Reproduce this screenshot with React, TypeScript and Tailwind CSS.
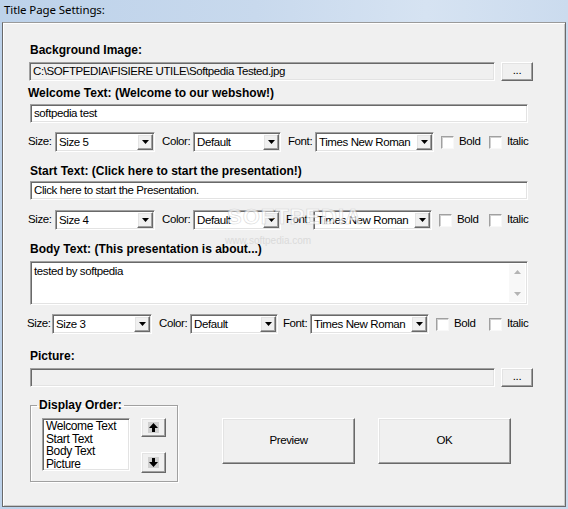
import React from "react";

const NARROW = "font-['Liberation_Sans',Arial,sans-serif] text-[11.5px] tracking-[-0.4px] text-black";
const BOLD = "font-['Liberation_Sans',Arial,sans-serif] font-bold text-[12px] leading-[14px] tracking-normal text-black";
const SUNKEN =
  "border border-t-[#a0a0a0] border-l-[#a0a0a0] border-r-white border-b-white shadow-[inset_1px_1px_0_#696969,inset_-1px_-1px_0_#e3e3e3]";
const RAISED =
  "border border-t-white border-l-white border-r-[#696969] border-b-[#696969] shadow-[inset_-1px_-1px_0_#a0a0a0,inset_1px_1px_0_#e3e3e3]";

function Select({ cls, value }: { cls: string; value: string }) {
  return (
    <div className={`${SUNKEN} bg-white h-[20px] p-[1px] flex items-center ${cls}`}>
      <span className="flex-1 pl-[2px] leading-[16px] whitespace-nowrap overflow-hidden">{value}</span>
      <div className={`${RAISED} bg-[#f0f0f0] w-[16px] h-[16px] flex items-center justify-center shrink-0`}>
        <svg width="7" height="4" viewBox="0 0 7 4">
          <polygon points="0,0 7,0 3.5,4" fill="#000" />
        </svg>
      </div>
    </div>
  );
}

function Check({ cls = "" }: { cls?: string }) {
  return (
    <div
      className={`w-[13px] h-[13px] shrink-0 bg-white border border-t-[#a0a0a0] border-l-[#a0a0a0] border-r-[#f8f8f8] border-b-[#f8f8f8] shadow-[inset_1px_1px_0_#d0d0d0] ${cls}`}
    />
  );
}

function Arrow({ up }: { up: boolean }) {
  return (
    <div className="w-[11px] h-[11px] bg-[#d0d0d0] flex items-center justify-center">
      <svg width="9" height="9" viewBox="0 0 9 9">
        {up ? (
          <polygon points="4.5,0 9,5 6,5 6,9 3,9 3,5 0,5" fill="#000" />
        ) : (
          <polygon points="3,0 6,0 6,4 9,4 4.5,9 0,4 3,4" fill="#000" />
        )}
      </svg>
    </div>
  );
}

export default function App() {
  return (
    <div className="w-[568px] h-[509px] overflow-hidden flex flex-col bg-[linear-gradient(90deg,#bdd2ea_0%,#c8d9ed_45%,#d6e3f2_75%,#cbdbee_100%)]">
      <div className="h-[22px] flex items-center pl-[4px] pb-[2px] font-['Noto_Sans','Open_Sans',sans-serif] text-[11.5px] tracking-[-0.1px] text-black">
        Title Page Settings:
      </div>
      <div className={`relative mx-[2px] h-[485px] bg-[#f0f0f0] border border-[#6a6a6a] border-t-[#9a9a9a] shadow-[inset_1px_1px_0_#ffffff,inset_-1px_-1px_0_#c8c8c8] flex flex-col ${NARROW}`}>
        {/* Background image */}
        <div className={`mt-[20px] ml-[27px] ${BOLD}`}>Background Image:</div>
        <div className="mt-[5px] ml-[26px] flex">
          <div className={`${SUNKEN} bg-[#f0f0f0] w-[466px] h-[19px] flex items-center pl-[3px] leading-[15px] whitespace-nowrap`}>
            C:\SOFTPEDIA\FISIERE UTILE\Softpedia Tested.jpg
          </div>
          <div className={`${RAISED} bg-[#f0f0f0] ml-[6px] w-[32px] h-[19px] flex items-center justify-center leading-none pb-[2px]`}>
            ...
          </div>
        </div>

        {/* Welcome text */}
        <div className={`mt-[5px] ml-[25px] ${BOLD}`}>Welcome Text: (Welcome to our webshow!)</div>
        <div className={`${SUNKEN} mt-[4px] ml-[27px] bg-white w-[498px] h-[19px] flex items-center pl-[3px] leading-[15px]`}>
          softpedia test
        </div>
        <div className="mt-[9px] ml-[25px] flex items-center h-[20px]">
          <span className="w-[27px]">Size:</span>
          <Select cls="w-[100px]" value="Size 5" />
          <span className="ml-[7px] w-[31px]">Color:</span>
          <Select cls="w-[88px]" value="Default" />
          <span className="ml-[7px] w-[27px]">Font:</span>
          <Select cls="w-[119px]" value="Times New Roman" />
          <Check cls="ml-[7px]" />
          <span className="ml-[5px] w-[30px]">Bold</span>
          <Check />
          <span className="ml-[5px]">Italic</span>
        </div>

        {/* Start text */}
        <div className={`mt-[12px] ml-[27px] ${BOLD}`}>Start Text: (Click here to start the presentation!)</div>
        <div className={`${SUNKEN} mt-[3px] ml-[27px] bg-white w-[498px] h-[19px] flex items-center pl-[3px] leading-[15px]`}>
          Click here to start the Presentation.
        </div>
        <div className="mt-[10px] ml-[25px] flex items-center h-[20px]">
          <span className="w-[27px]">Size:</span>
          <Select cls="w-[100px]" value="Size 4" />
          <span className="ml-[7px] w-[31px]">Color:</span>
          <Select cls="w-[88px]" value="Default" />
          <span className="ml-[5px] w-[27px]">Font:</span>
          <Select cls="w-[119px]" value="Times New Roman" />
          <Check cls="ml-[7px]" />
          <span className="ml-[5px] w-[32px]">Bold</span>
          <Check />
          <span className="ml-[5px]">Italic</span>
        </div>

        {/* Body text */}
        <div className={`mt-[12px] ml-[27px] ${BOLD}`}>Body Text: (This presentation is about...)</div>
        <div className={`${SUNKEN} mt-[5px] ml-[27px] bg-white w-[498px] h-[44px] p-[2px] flex`}>
          <div className="flex-1 pl-[1px] leading-[15px]">tested by softpedia</div>
          <div className="w-[16px] bg-[#f8f8f8] flex flex-col justify-between items-center py-[6px]">
            <svg width="7" height="4" viewBox="0 0 7 4">
              <polygon points="3.5,0 7,4 0,4" fill="#b4b4b4" />
            </svg>
            <svg width="7" height="4" viewBox="0 0 7 4">
              <polygon points="0,0 7,0 3.5,4" fill="#b4b4b4" />
            </svg>
          </div>
        </div>
        <div className="mt-[9px] ml-[24px] flex items-center h-[20px]">
          <span className="w-[25px]">Size:</span>
          <Select cls="w-[100px]" value="Size 3" />
          <span className="ml-[7px] w-[31px]">Color:</span>
          <Select cls="w-[88px]" value="Default" />
          <span className="ml-[5px] w-[27px]">Font:</span>
          <Select cls="w-[119px]" value="Times New Roman" />
          <Check cls="ml-[7px]" />
          <span className="ml-[5px] w-[35px]">Bold</span>
          <Check />
          <span className="ml-[5px]">Italic</span>
        </div>

        {/* Picture */}
        <div className={`mt-[15px] ml-[27px] ${BOLD}`}>Picture:</div>
        <div className="mt-[5px] ml-[27px] flex">
          <div className={`${SUNKEN} bg-[#f0f0f0] w-[465px] h-[19px]`} />
          <div className={`${RAISED} bg-[#f0f0f0] ml-[6px] w-[32px] h-[19px] flex items-center justify-center leading-none pb-[2px]`}>
            ...
          </div>
        </div>

        {/* Bottom */}
        <div className="mt-[11px] ml-[27px] flex items-start">
          <fieldset className="w-[148px] h-[84px] border border-[#a0a0a0] shadow-[inset_1px_1px_0_#ffffff,1px_1px_0_#ffffff]">
            <legend className={`ml-[6px] px-[2px] ${BOLD}`}>Display Order:</legend>
            <div className="flex mt-[6px] ml-[11px]">
              <div className={`${SUNKEN} bg-white w-[88px] h-[53px] pl-[3px] pt-[1px] leading-[12.5px] text-[12px]`}>
                <div>Welcome Text</div>
                <div>Start Text</div>
                <div>Body Text</div>
                <div>Picture</div>
              </div>
              <div className="ml-[11px] flex flex-col">
                <div className={`${RAISED} bg-[#f0f0f0] w-[25px] h-[19px] flex items-center justify-center`}>
                  <Arrow up />
                </div>
                <div className={`${RAISED} bg-[#f0f0f0] mt-[15px] w-[25px] h-[21px] flex items-center justify-center`}>
                  <Arrow up={false} />
                </div>
              </div>
            </div>
          </fieldset>
          <div className={`${RAISED} bg-[#f0f0f0] ml-[44px] mt-[20px] w-[133px] h-[46px] flex items-center justify-center`}>
            Preview
          </div>
          <div className={`${RAISED} bg-[#f0f0f0] ml-[23px] mt-[20px] w-[133px] h-[46px] flex items-center justify-center`}>
            OK
          </div>
        </div>

        {/* watermark */}
        <div className="absolute left-[224px] top-[182px] pointer-events-none flex flex-col items-start opacity-70">
          <div className="font-['Liberation_Sans',Arial,sans-serif] font-bold text-[22px] leading-[24px] tracking-[1px] text-white [-webkit-text-stroke:0.6px_#c9c9c9]">
            SOFTPEDIA<sup className="text-[7px] [-webkit-text-stroke:0px]">™</sup>
          </div>
          <div className="font-['Liberation_Sans',Arial,sans-serif] text-[10px] leading-[12px] tracking-normal text-[#d2d2d2] ml-[-2px] mt-[6px]">
            www.softpedia.com
          </div>
        </div>
      </div>
    </div>
  );
}
